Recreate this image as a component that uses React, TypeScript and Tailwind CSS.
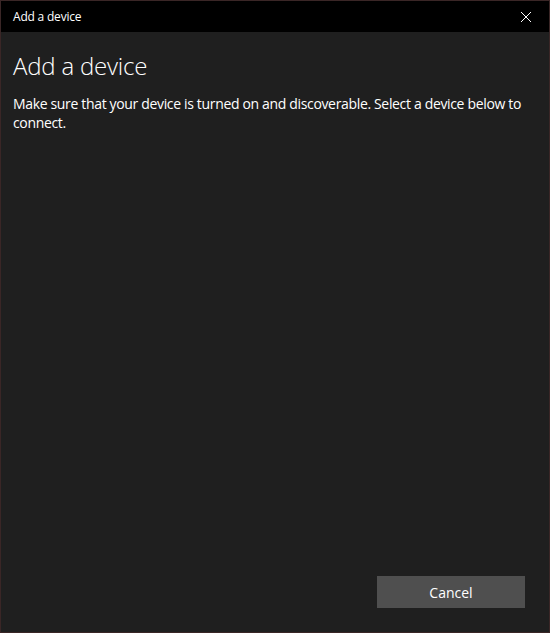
export default function App() {
  return (
    <div className="h-[633px] w-[550px] border border-[#3a2626] bg-[#1f1f1f] flex flex-col text-white" style={{ fontFamily: '"Open Sans", "Noto Sans", sans-serif' }}>
      {/* Title bar */}
      <div className="h-[31px] bg-black flex items-center justify-between shrink-0">
        <span className="pl-3 text-[12px] tracking-[-0.2px]">Add a device</span>
        <button className="w-[46px] h-full flex items-center justify-center">
          <svg width="10" height="10" viewBox="0 0 10 10" stroke="white" strokeWidth="1">
            <path d="M0 0L10 10M10 0L0 10" />
          </svg>
        </button>
      </div>

      <div className="flex-1 flex flex-col px-3">
        <h1 className="text-[24px] font-light mt-[18px] leading-[32px] tracking-[-0.2px]">Add a device</h1>
        <p className="text-[14px] leading-[19px] mt-[12px] tracking-[-0.34px]">
          Make sure that your device is turned on and discoverable. Select a device below to connect.
        </p>
        <div className="mt-auto flex justify-end pb-[24px] pr-[12px]">
          <button className="w-[148px] h-[32px] bg-[#4f4f4f] text-[14px]">Cancel</button>
        </div>
      </div>
    </div>
  );
}
